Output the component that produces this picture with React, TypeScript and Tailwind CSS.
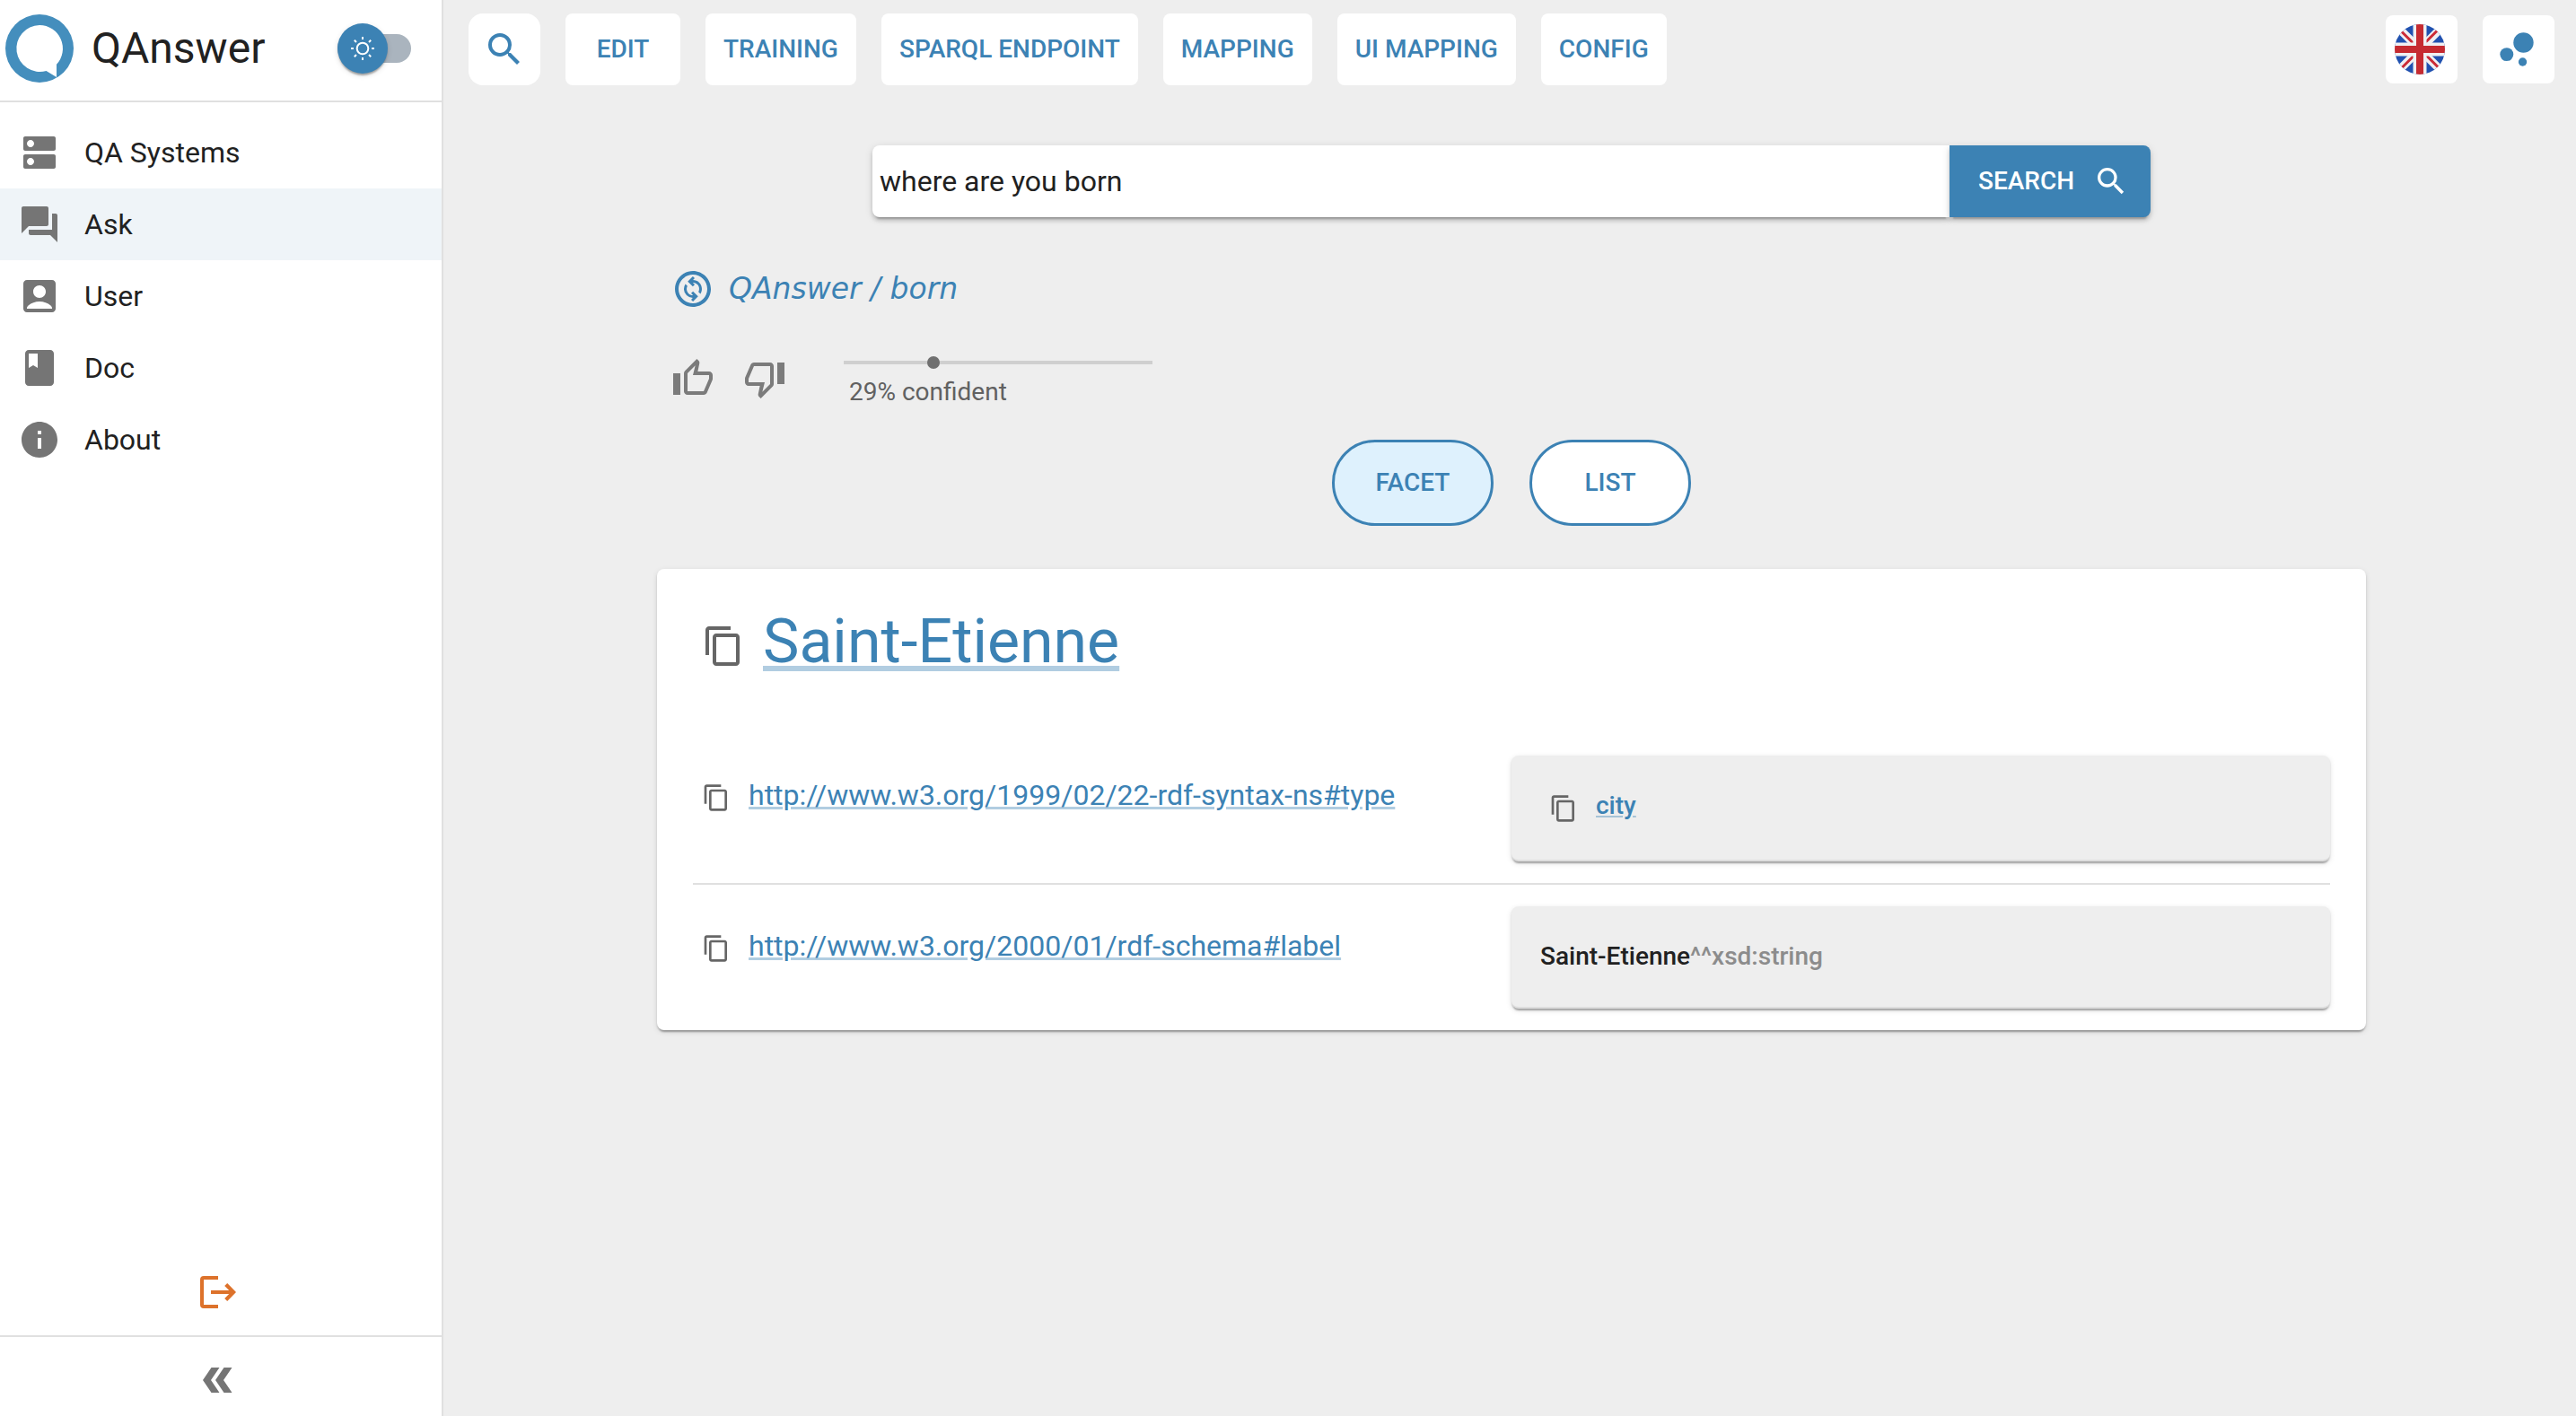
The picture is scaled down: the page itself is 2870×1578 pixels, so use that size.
import type { ReactNode } from "react";
import {
  MdDns,
  MdForum,
  MdAccountBox,
  MdBook,
  MdInfo,
  MdSearch,
  MdOutlineChangeCircle,
  MdOutlineThumbUp,
  MdOutlineThumbDown,
  MdContentCopy,
  MdBubbleChart,
} from "react-icons/md";

const navItems = [
  { label: "QA Systems", icon: MdDns, active: false },
  { label: "Ask", icon: MdForum, active: true },
  { label: "User", icon: MdAccountBox, active: false },
  { label: "Doc", icon: MdBook, active: false },
  { label: "About", icon: MdInfo, active: false },
];

const toolbar = ["EDIT", "TRAINING", "SPARQL ENDPOINT", "MAPPING", "UI MAPPING", "CONFIG"];

function Logo() {
  return (
    <svg viewBox="0 0 76 76" className="size-[76px] shrink-0" aria-hidden="true">
      <circle cx="38" cy="38" r="38" fill="#448ebd" />
      <path d="M38 12a26 26 0 0 1 19 43.700V70L45.500 63A26 26 0 1 1 38 12Z" fill="#fff" />
    </svg>
  );
}

function SunIcon() {
  return (
    <svg viewBox="0 0 28 28" className="size-7" fill="none" stroke="#fff" strokeWidth="2" aria-hidden="true">
      <circle cx="14" cy="14" r="6.300" />
      <path d="M14 1v3M14 24v3M1 14h3M24 14h3M4.800 4.800l2.200 2.200M21 21l2.200 2.200M4.800 23.200L7 21M21 7l2.200-2.200" />
    </svg>
  );
}

function FlagIcon() {
  return (
    <svg viewBox="0 0 56 56" className="size-14" aria-hidden="true">
      <defs>
        <clipPath id="flag-circle">
          <circle cx="28" cy="28" r="28" />
        </clipPath>
      </defs>
      <g clipPath="url(#flag-circle)">
        <rect width="56" height="56" fill="#2051b0" />
        <path d="M5 5l46 46M51 5L5 51" stroke="#f0f0f2" strokeWidth="9" />
        <path d="M8 8.500L24 24.500M48 6.500L31 23.500M32 31.500L48.500 48M25 31.500L8 48.500" stroke="#cb2a36" strokeWidth="3" />
        <path d="M28 0v56M0 28h56" stroke="#f0f0f2" strokeWidth="15" />
        <path d="M28 0v56M0 28h56" stroke="#c62a30" strokeWidth="8" />
      </g>
    </svg>
  );
}

function LogoutIcon() {
  return (
    <svg viewBox="0 0 40 36" className="h-9 w-10" fill="#dd722b" aria-hidden="true">
      <path d="M20 0H4a4 4 0 0 0-4 4v28a4 4 0 0 0 4 4h16v-4H4V4h16Z" />
      <path d="M30.200 8L40 18l-9.800 10-3-3 5-5H12v-4h20.200l-5-5Z" />
    </svg>
  );
}

function CollapseIcon() {
  return (
    <svg viewBox="0 0 33 28" className="h-7 w-[33px]" fill="#757575" aria-hidden="true">
      <path d="M9.500 0h9L9 14l9.500 14h-9L0 14Z" />
      <path d="M23.500 0h9L23 14l9.500 14h-9L14 14Z" />
    </svg>
  );
}

function Sidebar() {
  return (
    <aside className="flex w-[494px] shrink-0 flex-col border-r-2 border-[#e0e0e0] bg-white">
      <div className="flex h-[114px] items-center border-b-2 border-[#e0e0e0] pb-1 pl-1.5 pr-[34px]">
        <Logo />
        <span className="ml-5 text-5xl">QAnswer</span>
        <button type="button" role="switch" aria-checked="false" aria-label="Dark mode" className="ml-auto flex h-14 w-[82px] items-center">
          <span className="flex h-8 w-full items-center rounded-full bg-[#aab4be]">
            <span className="flex size-14 shrink-0 items-center justify-center rounded-full bg-[#3c82b4] shadow-[0_4px_2px_-2px_rgba(0,0,0,0.2),0_2px_2px_rgba(0,0,0,0.14),0_2px_6px_rgba(0,0,0,0.12)]">
              <SunIcon />
            </span>
          </span>
        </button>
      </div>
      <nav className="flex flex-col pt-4">
        {navItems.map(({ label, icon: Icon, active }) => (
          <a
            key={label}
            href="#"
            aria-current={active ? "page" : undefined}
            className={`flex h-20 items-center gap-[26px] pl-5 text-[32px] ${active ? "bg-[#eff4f8]" : ""}`}
          >
            <Icon className="size-12 text-[#757575]" />
            {label}
          </a>
        ))}
      </nav>
      <div className="mt-auto flex h-24 items-center justify-center pr-1.5">
        <button type="button" aria-label="Log out" className="flex size-14 items-center justify-center">
          <LogoutIcon />
        </button>
      </div>
      <div className="flex h-[90px] items-start justify-center border-t-2 border-[#e0e0e0] pr-2 pt-5">
        <button type="button" aria-label="Collapse menu" className="flex size-14 items-center justify-center">
          <CollapseIcon />
        </button>
      </div>
    </aside>
  );
}

function Toolbar() {
  return (
    <header className="flex items-center gap-7 text-[28px] font-medium text-[#3c82b4]">
      <button type="button" aria-label="Search" className="flex size-20 items-center justify-center rounded-2xl bg-white">
        <MdSearch className="size-12" />
      </button>
      {toolbar.map((label) => (
        <button key={label} type="button" className="h-20 min-w-32 rounded-lg bg-white px-5">
          {label}
        </button>
      ))}
      <button type="button" aria-label="Language" className="ml-auto flex h-[76px] w-20 items-center rounded-lg bg-white pl-2.5">
        <FlagIcon />
      </button>
      <button type="button" aria-label="Knowledge graph" className="flex h-[76px] w-20 items-center rounded-lg bg-white pl-2.5">
        <MdBubbleChart className="size-14" />
      </button>
    </header>
  );
}

function SearchBar() {
  return (
    <form className="mx-auto mt-[67px] flex h-20 w-full max-w-[1424px]" onSubmit={(e) => e.preventDefault()}>
      <input
        type="text"
        aria-label="Question"
        defaultValue="where are you born"
        className="min-w-0 flex-1 rounded-l-lg bg-white px-2 text-[32px] shadow-[0_6px_2px_-4px_rgba(0,0,0,0.2),0_4px_4px_rgba(0,0,0,0.14),0_2px_10px_rgba(0,0,0,0.12)] outline-none"
      />
      <button
        type="submit"
        className="flex w-56 items-center justify-between rounded-r-lg bg-[#3c82b4] pl-8 pr-6 text-[28px] font-medium text-white shadow-[0_6px_2px_-4px_rgba(0,0,0,0.2),0_4px_4px_rgba(0,0,0,0.14),0_2px_10px_rgba(0,0,0,0.12)]"
      >
        SEARCH
        <MdSearch className="size-10" />
      </button>
    </form>
  );
}

function Feedback() {
  return (
    <div className="mt-[50px] flex items-start gap-7 pl-3.5">
      <button type="button" aria-label="Good answer" className="flex size-[52px] items-center justify-center text-[#7b7b7b]">
        <MdOutlineThumbUp className="size-12" />
      </button>
      <button type="button" aria-label="Bad answer" className="flex size-[52px] items-center justify-center text-[#7b7b7b]">
        <MdOutlineThumbDown className="size-12" />
      </button>
      <div className="ml-[27px] flex w-[358px] flex-col">
        <input
          id="confidence"
          type="range"
          min={0}
          max={100}
          defaultValue={29}
          className="h-4 w-full appearance-none bg-transparent [&::-webkit-slider-runnable-track]:h-1 [&::-webkit-slider-runnable-track]:bg-[linear-gradient(to_right,transparent_7px,#cfcfcf_7px,#cfcfcf_calc(100%-7px),transparent_calc(100%-7px))] [&::-webkit-slider-thumb]:-mt-[5px] [&::-webkit-slider-thumb]:size-3.5 [&::-webkit-slider-thumb]:appearance-none [&::-webkit-slider-thumb]:rounded-full [&::-webkit-slider-thumb]:bg-[#707070]"
        />
        <label htmlFor="confidence" className="mt-1.5 pl-[13px] text-[28px] leading-[38px] text-[#616161]">
          29% confident
        </label>
      </div>
    </div>
  );
}

function ResourceLink({ children, className }: { children: string; className: string }) {
  return (
    <div className="flex items-center gap-5 pl-2.5">
      <button type="button" aria-label={`Copy ${children}`} className="pt-1.5 text-[#666666]">
        <MdContentCopy className="size-8" />
      </button>
      <a href="#" className={`leading-[48px] text-[#3c82b4] underline decoration-[#3c82b4]/40 ${className}`}>
        {children}
      </a>
    </div>
  );
}

function FactRow({ property, pad, children }: { property: string; pad: string; children: ReactNode }) {
  return (
    <div className="grid grid-cols-2">
      <dt className="pt-5">
        <ResourceLink className="text-[32px]">{property}</ResourceLink>
      </dt>
      <dd
        className={`rounded-lg border-b-2 border-[#dedede] bg-[#eeeeee] px-8 text-[28px] font-medium leading-[48px] shadow-[0_4px_2px_-2px_rgba(0,0,0,0.2),0_2px_2px_rgba(0,0,0,0.14),0_2px_6px_rgba(0,0,0,0.12)] ${pad}`}
      >
        {children}
      </dd>
    </div>
  );
}

export default function App() {
  return (
    <div className="flex min-h-screen bg-[#eeeeee] font-['Roboto',sans-serif] text-[#212121]">
      <Sidebar />
      <main className="min-w-0 flex-1 pb-12 pl-7 pr-6 pt-[15px]">
        <Toolbar />
        <SearchBar />
        <div className="mx-auto mt-14 w-full max-w-[1904px]">
          <div className="flex h-12 items-center gap-4 pl-4 text-[#3c82b4]">
            <MdOutlineChangeCircle className="size-12" />
            <span className="font-['DejaVu_Sans',sans-serif] text-[33px] italic">QAnswer / born</span>
          </div>
          <Feedback />
          <div className="mt-[34px] flex justify-center gap-10 text-[28px] font-medium text-[#3c82b4]">
            <button type="button" className="h-24 w-[180px] rounded-full border-3 border-[#3c82b4] bg-[#def1fd]">
              FACET
            </button>
            <button type="button" className="h-24 w-[180px] rounded-full border-3 border-[#3c82b4] bg-white">
              LIST
            </button>
          </div>
          <section className="mt-12 rounded-lg bg-white px-10 pb-6 pt-[39px] shadow-[0_4px_2px_-2px_rgba(0,0,0,0.2),0_2px_2px_rgba(0,0,0,0.14),0_2px_6px_rgba(0,0,0,0.12)]">
            <h1 className="flex items-center gap-5 pl-2.5 text-[68px] leading-[84px] text-[#3c82b4]">
              <button type="button" aria-label="Copy Saint-Etienne" className="pt-2.5 text-[#666666]">
                <MdContentCopy className="size-12" />
              </button>
              <a href="#" className="underline decoration-[#3c82b4]/40">
                Saint-Etienne
              </a>
            </h1>
            <dl className="mt-[85px] flex flex-col gap-6">
              <FactRow property="http://www.w3.org/1999/02/22-rdf-syntax-ns#type" pad="pt-8 pb-9">
                <ResourceLink className="font-medium">city</ResourceLink>
              </FactRow>
              <div className="h-0.5 bg-[#e0e0e0]" />
              <FactRow property="http://www.w3.org/2000/01/rdf-schema#label" pad="py-8">
                Saint-Etienne<span className="text-[#8c8c8c]">^^xsd:string</span>
              </FactRow>
            </dl>
          </section>
        </div>
      </main>
    </div>
  );
}
